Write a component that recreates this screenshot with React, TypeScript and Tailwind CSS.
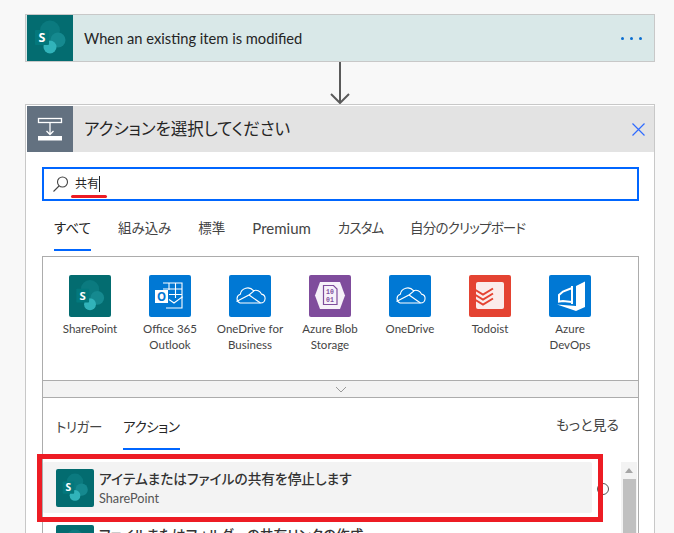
import React from 'react';

const FONT = "font-['Lato','Noto_Sans_CJK_JP',sans-serif] [font-feature-settings:'palt']";

const SharePointMark = ({ size }: { size: number }) => (
  <svg width={size} height={size} viewBox="0 0 46 46">
    <circle cx="23" cy="15.500" r="10" fill="#0b7a7f" />
    <circle cx="31" cy="25" r="7.500" fill="#15898f" />
    <circle cx="23" cy="32" r="6.500" fill="#31b3ba" />
    <rect x="8" y="15" width="14" height="15" rx="1" fill="#03787c" />
    <text x="15" y="27" fontSize="12.500" fontWeight="700" fill="#fff" textAnchor="middle" fontFamily="Noto Sans, sans-serif">S</text>
  </svg>
);

const CloudMark = () => (
  <svg width="42" height="42" viewBox="0 0 42 42" fill="none" stroke="#fff" strokeWidth="1.100">
    <path d="M11 28h20.500a4.500 4.500 0 0 0 1-8.900 6 6 0 0 0-8-3.400 7.500 7.500 0 0 0-13.200 3.600A4.600 4.600 0 0 0 11 28z" />
    <path d="M7.500 26.500 20 20l11.500 8M20 20l5-4.200" />
  </svg>
);

const OutlookMark = () => (
  <svg width="42" height="42" viewBox="0 0 42 42" fill="none" stroke="#fff" strokeWidth="1.100">
    <path d="M14 8h19v15M20 8v7M26.500 8v15M14 14h19M20 19.500h13" />
    <path d="M17 33h16V22l-8 6-5-3.500" />
    <rect x="6" y="15" width="13" height="13" fill="#fff" stroke="none" />
    <text x="12.500" y="26" fontSize="11.500" fontWeight="700" fill="#0078d4" stroke="none" textAnchor="middle" fontFamily="Noto Sans, sans-serif">O</text>
  </svg>
);

const BlobMark = () => (
  <svg width="42" height="42" viewBox="0 0 42 42">
    <path d="M11 7h20l5 13.500L31 34H11L6 20.500z" fill="#f6f1f9" />
    <path d="M14.500 10.500h10l3.500 3.500v15.500H14.500z" fill="none" stroke="#7f4c9c" strokeWidth="1.200" />
    <text x="21" y="19" fontSize="6.500" fontWeight="700" fill="#7f4c9c" textAnchor="middle" fontFamily="Liberation Mono, monospace">10</text>
    <text x="21" y="26.500" fontSize="6.500" fontWeight="700" fill="#7f4c9c" textAnchor="middle" fontFamily="Liberation Mono, monospace">01</text>
  </svg>
);

const TodoistMark = () => (
  <svg width="42" height="42" viewBox="0 0 42 42">
    <rect x="7" y="7" width="28" height="27" rx="2" fill="#fbeceb" />
    <path d="M6.500 15 14 19.500 24 13.500M6.500 20 14 24.500 24 18.500M6.500 25 14 29.500 24 23.500" fill="none" stroke="#e44332" strokeWidth="2" />
  </svg>
);

const DevOpsMark = () => (
  <svg width="42" height="42" viewBox="0 0 42 42" fill="#fff">
    <path d="M27 11 36 6.500V32l-9 4-19-6.500 19 1.500z" />
    <path d="M23 13 14 16.500 10 20v6.500l4-.5 9 1M23 11v18" fill="none" stroke="#fff" strokeWidth="2" />
  </svg>
);

const connectors = [
  { name: ['SharePoint'], bg: 'bg-[#036c70]', mark: <SharePointMark size={42} /> },
  { name: ['Office 365', 'Outlook'], bg: 'bg-[#0078d4]', mark: <OutlookMark /> },
  { name: ['OneDrive for', 'Business'], bg: 'bg-[#0078d4]', mark: <CloudMark /> },
  { name: ['Azure Blob', 'Storage'], bg: 'bg-[#7f4c9c]', mark: <BlobMark /> },
  { name: ['OneDrive'], bg: 'bg-[#0078d4]', mark: <CloudMark /> },
  { name: ['Todoist'], bg: 'bg-[#e44332]', mark: <TodoistMark /> },
  { name: ['Azure', 'DevOps'], bg: 'bg-[#0078d4]', mark: <DevOpsMark /> },
];

const tabs = [
  { label: 'すべて', className: 'text-[#252525]' },
  { label: '組み込み', className: '' },
  { label: '標準', className: '' },
  { label: 'Premium', className: 'text-[15px]' },
  { label: 'カスタム', className: 'tracking-[-1px]' },
  { label: '自分のクリップボード', className: 'tracking-[-0.800px]' },
];

export default function App() {
  return (
    <div className={`${FONT} h-[533px] w-[674px] overflow-hidden bg-[#f8f8f8] pt-[14px] pl-[25px] text-[#252525]`}>
      {/* trigger card */}
      <div className="flex h-[48px] w-[630px] items-center border border-[#c8c8c8] bg-[#d9e8e8] pl-px">
        <div className="flex h-[46px] w-[46px] shrink-0 items-center justify-center bg-[#036c70]">
          <SharePointMark size={46} />
        </div>
        <span className="ml-[11px] flex-1 text-[14.700px]">When an existing item is modified</span>
        <div className="mr-[12px] flex gap-[6px]">
          <span className="h-[3px] w-[3px] rounded-full bg-[#0a6ed1]" />
          <span className="h-[3px] w-[3px] rounded-full bg-[#0a6ed1]" />
          <span className="h-[3px] w-[3px] rounded-full bg-[#0a6ed1]" />
        </div>
      </div>

      {/* arrow between cards */}
      <div className="flex h-[42px] w-[630px] justify-center">
        <svg width="26" height="42" viewBox="0 0 26 42" fill="none" stroke="#5a5a5a" strokeWidth="2">
          <path d="M13 0v40M4 32l9 9 9-9" />
        </svg>
      </div>

      {/* action card */}
      <div className="h-[430px] w-[630px] border border-[#c8c8c8] bg-white pt-px pl-px">
        <div className="flex h-[46px] items-center bg-[#e3e3e3]">
          <div className="flex h-[46px] w-[46px] shrink-0 items-center justify-center bg-[#637180]">
            <svg width="26" height="26" viewBox="0 0 26 26" fill="none" stroke="#fff" strokeWidth="1.300">
              <rect x="1.500" y="2.500" width="23" height="4" />
              <path d="M13 7v11M9.500 15l3.500 3.500 3.500-3.500" />
              <rect x="1" y="20" width="24" height="4.500" fill="#fff" stroke="none" />
            </svg>
          </div>
          <span className="ml-[11px] flex-1 text-[16.500px]">アクションを選択してください</span>
          <svg width="13" height="13" viewBox="0 0 13 13" fill="none" stroke="#2f6bff" strokeWidth="1.200" className="mr-[9px]">
            <path d="M0.500 0.500l12 12M12.500 0.500l-12 12" />
          </svg>
        </div>

        <div className="relative mt-[15px] ml-[15px] flex h-[34px] w-[597px] items-center border-2 border-[#0066ff] pl-[8px]">
          <svg width="18" height="18" viewBox="0 0 18 18" fill="none" stroke="#444" strokeWidth="1.100">
            <circle cx="10.500" cy="7" r="5" />
            <path d="M7 11 1.500 16.500" />
          </svg>
          <span className="ml-[5px] text-[12px] leading-none">共有</span>
          <span className="h-[16px] w-px bg-[#222]" />
          <span className="absolute top-[26px] left-[27px] h-[3px] w-[36px] rounded-full bg-[#ed1c24]" />
        </div>

        <div className="mt-[10px] ml-[27px] flex h-[45px] items-start gap-[27px] text-[13.500px] text-[#444]">
          {tabs.map((tab, i) => (
            <div key={tab.label} className="relative flex h-[40px] items-center pb-[6px]">
              <span className={tab.className}>{tab.label}</span>
              {i === 0 && <span className="absolute bottom-0 left-0 h-[2px] w-full bg-[#0066ff]" />}
            </div>
          ))}
        </div>

        {/* connector grid */}
        <div className="ml-[15px] h-[124px] w-[597px] border border-b-0 border-[#acacac] px-[17px] pt-[18px]">
          <div className="flex gap-[20px]">
            {connectors.map((c) => (
              <div key={c.name[0]} className="flex w-[60px] flex-col items-center">
                <div className={`flex h-[42px] w-[42px] items-center justify-center overflow-hidden rounded-[2px] ${c.bg}`}>{c.mark}</div>
                <div className="mt-[4px] text-center text-[11.500px] leading-[15.500px] whitespace-nowrap text-[#444]">
                  {c.name.map((line) => (
                    <div key={line}>{line}</div>
                  ))}
                </div>
              </div>
            ))}
          </div>
        </div>

        {/* collapse strip */}
        <div className="ml-[15px] flex h-[18px] w-[597px] items-center justify-center border border-[#acacac] bg-[#f3f3f3]">
          <svg width="12" height="7" viewBox="0 0 12 7" fill="none" stroke="#999" strokeWidth="1">
            <path d="M1 1l5 5 5-5" />
          </svg>
        </div>

        {/* actions list */}
        <div className="relative ml-[15px] h-[140px] w-[597px] border-x border-[#acacac]">
          <div className="flex h-[51px] items-start pt-[9px] pr-[19px] pl-[13px] text-[13.500px]">
            <span className="mr-[21px] flex h-[40px] items-center tracking-[-0.400px] text-[#444]">トリガー</span>
            <span className="relative flex h-[40px] items-center tracking-[-0.400px]">
              アクション
              <span className="absolute bottom-[-3px] left-0 h-[2px] w-full bg-[#0066ff]" />
            </span>
            <span className="-mt-[3px] ml-auto flex h-[40px] items-center text-[14px] text-[#444]">もっと見る</span>
          </div>

          <div className="flex">
            <div className="mt-[13px] w-[549px]">
              <div className="flex h-[51px] items-center rounded-[2px] bg-[#f3f3f3] pl-[13px]">
                <div className="flex h-[38px] w-[38px] shrink-0 items-center justify-center rounded-[2px] bg-[#036c70]">
                  <SharePointMark size={38} />
                </div>
                <div className="ml-[5px]">
                  <div className="text-[13.700px] leading-[17px] font-medium text-[#333]">アイテムまたはファイルの共有を停止します</div>
                  <div className="mt-[3px] text-[12.700px] leading-[16px] text-[#555]">SharePoint</div>
                </div>
              </div>
              <div className="mt-[12px] flex h-[38px] pl-[13px]">
                <div className="flex h-[38px] w-[38px] shrink-0 items-center justify-center rounded-[2px] bg-[#036c70]">
                  <SharePointMark size={38} />
                </div>
                <div className="ml-[5px] pt-px text-[13.700px] leading-[17px] font-medium text-[#333]">ファイルまたはフォルダーの共有リンクの作成</div>
              </div>
            </div>
            <div className="mt-[34px] ml-[5px] h-[12px] w-[12px] shrink-0 rounded-full border border-[#555]" />
            <div className="mt-[13px] ml-[12px] flex h-[80px] w-[16px] shrink-0 flex-col items-center bg-[#f3f3f3]">
              <div className="mt-[6px] h-0 w-0 shrink-0 border-x-[4px] border-b-[5px] border-x-transparent border-b-[#a6a6a6]" />
              <div className="mt-[6px] h-full w-[13px] bg-[#c0c0c0]" />
            </div>
          </div>
        </div>
      </div>

      {/* annotation over the first result */}
      <div className="pointer-events-none absolute top-[454px] left-[37px] h-[68px] w-[566px] border-[5px] border-[#ed1c24]" />
    </div>
  );
}
